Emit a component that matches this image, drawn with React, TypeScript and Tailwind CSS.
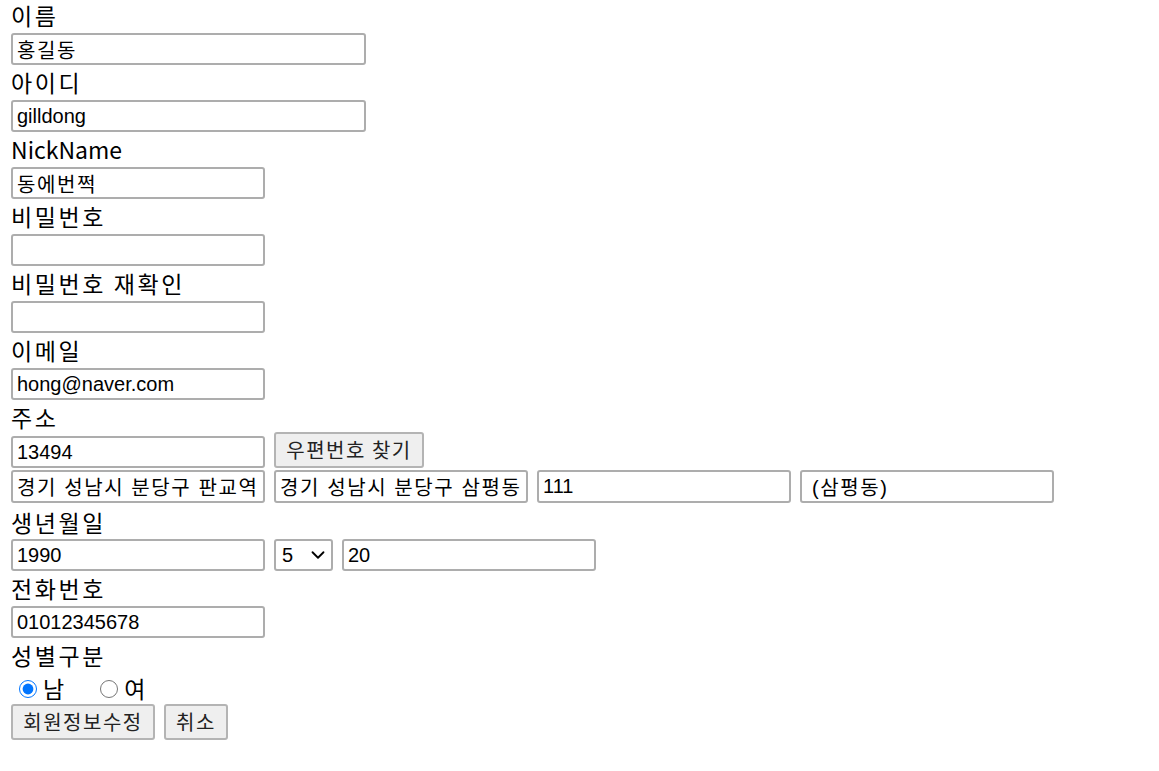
import { ChevronDown } from "lucide-react"

const labelCls = "block h-[35px] leading-[35px] text-[23px] text-black"
const inputCls =
    "block h-[32px] border-2 border-[#adadad] rounded-[3px] px-[4px] text-[20px] text-black bg-white font-['Liberation_Sans','Noto_Sans_CJK_KR',sans-serif] outline-none"
const btnCls =
    "h-[36px] border-2 border-[#b4b4b4] rounded-[3px] bg-[#efefef] px-0 text-[20px] tracking-[1.5px] text-[#222] font-['Noto_Sans_CJK_KR',sans-serif]"

const ko = "tracking-[1.6px]"

function Field({ label, value, w = "w-[254px]", kl = true, kv = false }: { label: string; value: string; w?: string; kl?: boolean; kv?: boolean }) {
    return (
        <div>
            <label className={`${labelCls} ${kl ? "tracking-[2.6px]" : ""}`}>{label}</label>
            <input className={`${inputCls} ${w} ${kv ? ko : ""}`} defaultValue={value} />
        </div>
    )
}

export default function App() {
    return (
        <div className="pl-[11px] -mt-[2px] bg-white min-h-[771px] font-['Noto_Sans_CJK_KR',sans-serif]">
            <Field label="이름" value="홍길동" w="w-[355px]" kv />
            <Field label="아이디" value="gilldong" w="w-[355px]" />
            <Field label="NickName" value="동에번쩍" kl={false} kv />
            <Field label="비밀번호" value="" />
            <Field label="비밀번호 재확인" value="" />
            <Field label="이메일" value="hong@naver.com" />

            {/* 주소 */}
            <label className="block h-[32px] leading-[35px] text-[23px] tracking-[2.6px] text-black">주소</label>
            <div className="flex items-end gap-[9px] h-[36px]">
                <input className={`${inputCls} w-[254px]`} defaultValue="13494" />
                <button className={`${btnCls} w-[150px]`}>우편번호 찾기</button>
            </div>
            <div className="flex gap-[9px] mt-[2px]">
                <input className={`${inputCls} ${ko} w-[254px] h-[33px]`} defaultValue="경기 성남시 분당구 판교역로 235" />
                <input className={`${inputCls} ${ko} w-[254px] h-[33px]`} defaultValue="경기 성남시 분당구 삼평동" />
                <input className={`${inputCls} w-[254px] h-[33px]`} defaultValue="111" />
                <input className={`${inputCls} ${ko} w-[254px] h-[33px] pl-[10px]`} defaultValue="(삼평동)" />
            </div>

            {/* 생년월일 */}
            <label className="block h-[36px] leading-[38px] text-[23px] tracking-[2.6px] text-black">생년월일</label>
            <div className="flex gap-[9px]">
                <input className={`${inputCls} w-[254px]`} defaultValue="1990" />
                <div className="relative w-[59px] h-[32px] border-2 border-[#adadad] rounded-[3px] bg-white flex items-center pl-[6px] text-[20px] font-['Liberation_Sans',sans-serif]">
                    5
                    <ChevronDown className="absolute right-[2px] top-[3px] w-[22px] h-[22px] text-black" strokeWidth={2} />
                </div>
                <input className={`${inputCls} w-[254px]`} defaultValue="20" />
            </div>

            <Field label="전화번호" value="01012345678" />

            {/* 성별구분 */}
            <label className={`${labelCls} tracking-[2.6px]`}>성별구분</label>
            <div className="flex items-center h-[31px] text-[23px] text-black">
                <input type="radio" name="g" defaultChecked className="w-[18px] h-[18px] ml-[8px] mr-[6px] accent-[#0075ff]" />
                <span>남</span>
                <input type="radio" name="g" className="w-[18px] h-[18px] ml-[36px] mr-[6px]" />
                <span>여</span>
            </div>
            <div className="flex gap-[9px]">
                <button className={`${btnCls} h-[35px] w-[144px]`}>회원정보수정</button>
                <button className={`${btnCls} h-[35px] w-[64px]`}>취소</button>
            </div>
        </div>
    )
}
